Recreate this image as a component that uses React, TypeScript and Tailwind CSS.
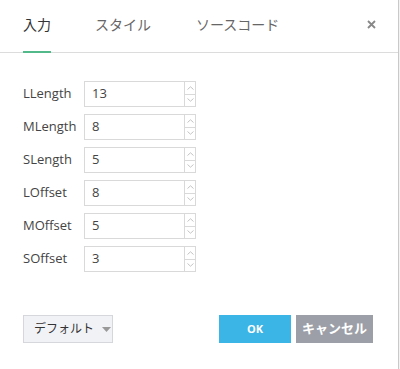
import React from "react";

const rows = [
  ["LLength", "13"],
  ["MLength", "8"],
  ["SLength", "5"],
  ["LOffset", "8"],
  ["MOffset", "5"],
  ["SOffset", "3"],
];

function Row({ label, value }: { label: string; value: string }) {
  return (
    <div className="flex items-center h-[26px]">
      <div className="w-[61px] text-[13px] text-[#444]">{label}</div>
      <div className="flex w-[112px] h-[26px] border border-[#d9d9d9] bg-white">
        <div className="flex-1 flex items-center pl-[7px] text-[13px] text-[#444]">{value}</div>
        <div className="w-[11px] border-l border-[#d9d9d9] flex flex-col">
          <div className="flex-1 flex items-center justify-center border-b border-[#d9d9d9]">
            <svg width="7" height="4" viewBox="0 0 7 4"><path d="M0.5 3.5 L3.5 0.8 L6.5 3.5" fill="none" stroke="#b5b5b5" strokeWidth="0.8" /></svg>
          </div>
          <div className="flex-1 flex items-center justify-center">
            <svg width="7" height="4" viewBox="0 0 7 4"><path d="M0.5 0.5 L3.5 3.2 L6.5 0.5" fill="none" stroke="#b5b5b5" strokeWidth="0.8" /></svg>
          </div>
        </div>
      </div>
    </div>
  );
}

export default function App() {
  return (
    <div
      className="w-[400px] h-[369px] bg-white flex overflow-hidden"
      style={{ fontFamily: '"Open Sans", "Noto Sans CJK JP", sans-serif' }}
    >
      <div className="w-[398px] h-full flex flex-col">
        <div className="h-[53px] border-b border-[#dcdcdc] flex items-stretch pl-[23px] pr-[22px]">
          <div className="flex items-center border-b-2 border-[#52b98a] -mb-px pb-[2px] text-[14px] text-[#333]">入力</div>
          <div className="flex items-center ml-[44px] pb-[4px] text-[14px] text-[#666]">スタイル</div>
          <div className="flex items-center ml-[45px] pb-[4px] text-[14px] text-[#666]">ソースコード</div>
          <div className="flex-1" />
          <div className="flex items-center pb-[4px]">
            <svg width="9" height="9" viewBox="0 0 9 9"><path d="M1 1 L8 8 M8 1 L1 8" stroke="#888" strokeWidth="1.8" /></svg>
          </div>
        </div>
        <div className="flex flex-col gap-[7px] pl-[23px] pt-[28px]">
          {rows.map(([l, v]) => (
            <Row key={l} label={l} value={v} />
          ))}
        </div>
        <div className="flex items-center pl-[23px] pr-[25px] mt-[43px]">
          <div className="flex items-center w-[90px] h-[28px] border border-[#d6d7dc] bg-[#f1f2f6] pl-[10px] text-[12px] text-[#333]">
            デフォルト
            <svg className="ml-[8px]" width="9" height="5" viewBox="0 0 9 5"><path d="M0 0 L9 0 L4.5 5 Z" fill="#999" /></svg>
          </div>
          <div className="flex-1" />
          <div className="w-[72px] h-[28px] bg-[#3bb4e6] text-white text-[11px] font-bold flex items-center justify-center">OK</div>
          <div className="w-[77px] h-[28px] ml-[5px] bg-[#9c9fa7] text-white text-[13px] font-bold flex items-center justify-center">キャンセル</div>
        </div>
      </div>
      <div className="w-px h-full bg-[#c9c9c9]" />
      <div className="w-px h-full bg-[#f3f3f3]" />
    </div>
  );
}
